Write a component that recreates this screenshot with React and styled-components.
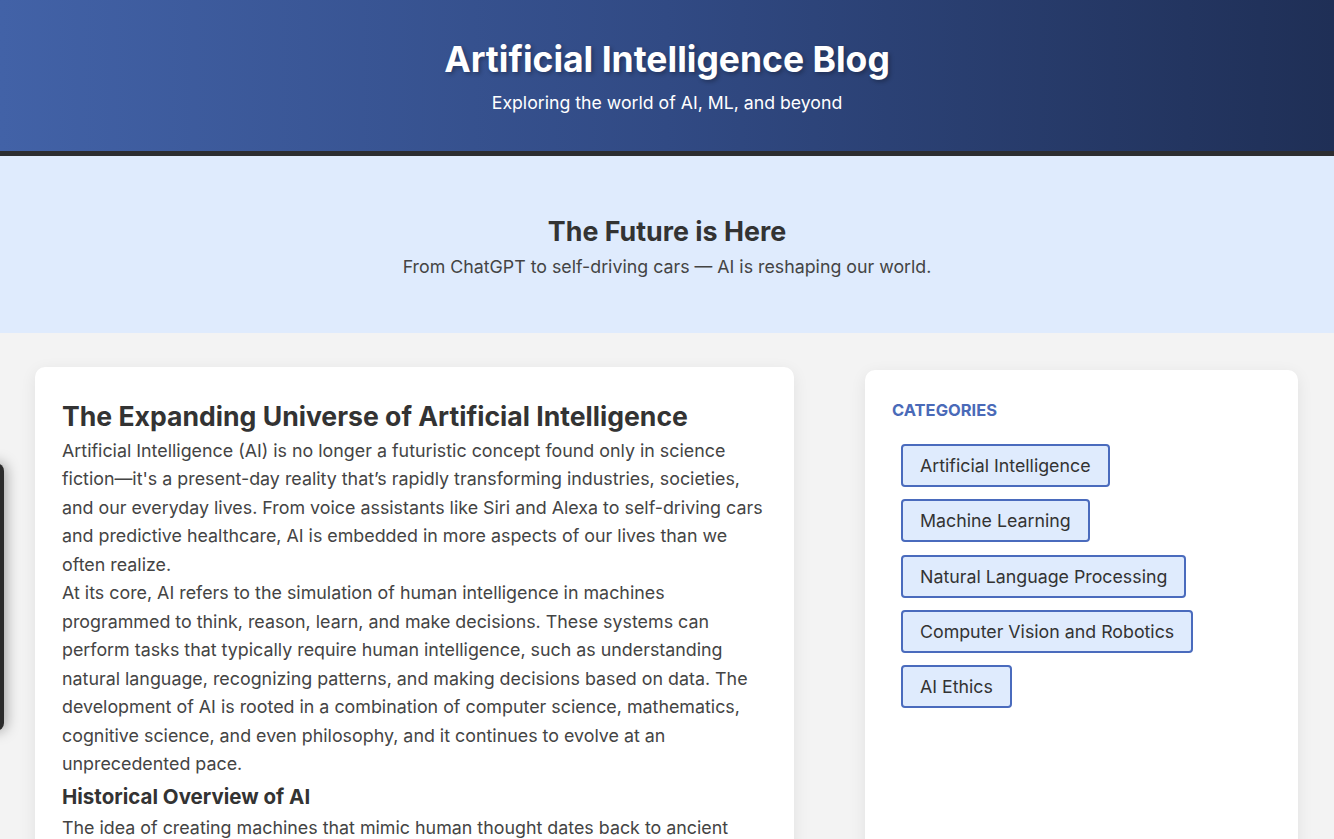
import React from "react";
import styled, { createGlobalStyle } from "styled-components";

const categories = [
  "Artificial Intelligence",
  "Machine Learning",
  "Natural Language Processing",
  "Computer Vision and Robotics",
  "AI Ethics",
];

const App = () => {
  return (
    <>
      <GlobalStyle />
      <Header>
        <Title>Artificial Intelligence Blog</Title>
        <Tagline>Exploring the world of AI, ML, and beyond</Tagline>
      </Header>

      <Hero>
        <HeroTitle>The Future is Here</HeroTitle>
        <HeroText>From ChatGPT to self-driving cars — AI is reshaping our world.</HeroText>
      </Hero>

      <Layout>
        <Article>
          <ArticleTitle>The Expanding Universe of Artificial Intelligence</ArticleTitle>
          <Para>
            Artificial Intelligence (AI) is no longer a futuristic concept found only in science
            fiction—it's a present-day reality that’s rapidly transforming industries, societies,
            and our everyday lives. From voice assistants like Siri and Alexa to self-driving cars
            and predictive healthcare, AI is embedded in more aspects of our lives than we
            often realize.
          </Para>
          <Para>
            At its core, AI refers to the simulation of human intelligence in machines
            programmed to think, reason, learn, and make decisions. These systems can
            perform tasks that typically require human intelligence, such as understanding
            natural language, recognizing patterns, and making decisions based on data. The
            development of AI is rooted in a combination of computer science, mathematics,
            cognitive science, and even philosophy, and it continues to evolve at an
            unprecedented pace.
          </Para>
          <SubTitle>Historical Overview of AI</SubTitle>
          <Para>
            The idea of creating machines that mimic human thought dates back to ancient
            times, when myths and legends described artificial beings endowed with
            intelligence by master craftsmen.
          </Para>
        </Article>

        <Sidebar>
          <SideHeading>CATEGORIES</SideHeading>
          <TagList>
            {categories.map((c) => (
              <Tag key={c}>{c}</Tag>
            ))}
          </TagList>
        </Sidebar>
      </Layout>

      <Drawer />
    </>
  );
};
export default App;

const GlobalStyle = createGlobalStyle`
  body {
    margin: 0;
    background: #f3f3f3;
    font-family: Inter, "Noto Sans", sans-serif;
    color: #333;
    overflow: hidden;
  }
`;

const Header = styled.header`
  background: linear-gradient(90deg, #4262a7 0%, #314a84 50%, #1f2f56 100%);
  border-bottom: 5px solid #2c2d30;
  height: 151px;
  display: flex;
  flex-direction: column;
  align-items: center;
  justify-content: center;
  color: #fff;
`;

const Title = styled.h1`
  margin: 0;
  font-size: 35.5px;
  font-weight: 700;
  text-shadow: 2px 2px 4px rgba(0, 0, 0, 0.3);
`;

const Tagline = styled.p`
  margin: 11px 0 0;
  font-size: 17.7px;
`;

const Hero = styled.section`
  background: #dfebfd;
  height: 177px;
  padding-top: 3px;
  box-sizing: border-box;
  display: flex;
  flex-direction: column;
  align-items: center;
  justify-content: center;
`;

const HeroTitle = styled.h2`
  margin: 0;
  font-size: 26.8px;
  font-weight: 700;
  color: #333;
`;

const HeroText = styled.p`
  margin: 9px 0 0;
  font-size: 17.8px;
  color: #444;
`;

const Layout = styled.main`
  display: grid;
  grid-template-columns: 759px 433px;
  justify-content: space-between;
  padding: 34px 36px 0 35px;
  align-items: start;
`;

const Card = styled.div`
  background: #fff;
  border-radius: 10px;
  box-shadow: 0 4px 16px rgba(0, 0, 0, 0.08);
`;

const Article = styled(Card)`
  padding: 29px 27px 30px 27px;
`;

const ArticleTitle = styled.h2`
  margin: 0;
  font-size: 26.6px;
  font-weight: 700;
  color: #333;
  line-height: 41px;
`;

const SubTitle = styled.h3`
  margin: 2px 0 0;
  font-size: 20.5px;
  font-weight: 700;
  color: #333;
  line-height: 34px;
`;

const Para = styled.p`
  margin: 0;
  font-size: 17.85px;
  line-height: 28.45px;
  color: #444;
`;

const Sidebar = styled(Card)`
  margin-top: 3px;
  padding: 31px 27px;
  min-height: 500px;
`;

const SideHeading = styled.h3`
  margin: 0;
  font-size: 16.5px;
  line-height: 19px;
  font-weight: 700;
  color: #4a6ab8;
`;

const TagList = styled.ul`
  list-style: none;
  margin: 24px 0 0;
  padding: 0 0 0 9px;
  display: flex;
  flex-direction: column;
  align-items: flex-start;
  gap: 12.3px;
`;

const Tag = styled.li`
  background: #dfebfd;
  border: 2px solid #4a6bbd;
  border-radius: 4px;
  padding: 0 17px;
  height: 39px;
  display: flex;
  align-items: center;
  font-size: 17.8px;
  color: #333;
`;

const Drawer = styled.aside`
  position: fixed;
  top: 463px;
  left: -240px;
  width: 244px;
  height: 268px;
  background: #2b2b2b;
  border-radius: 8px;
  box-shadow: 2px 0 14px rgba(0, 0, 0, 0.35);
`;
